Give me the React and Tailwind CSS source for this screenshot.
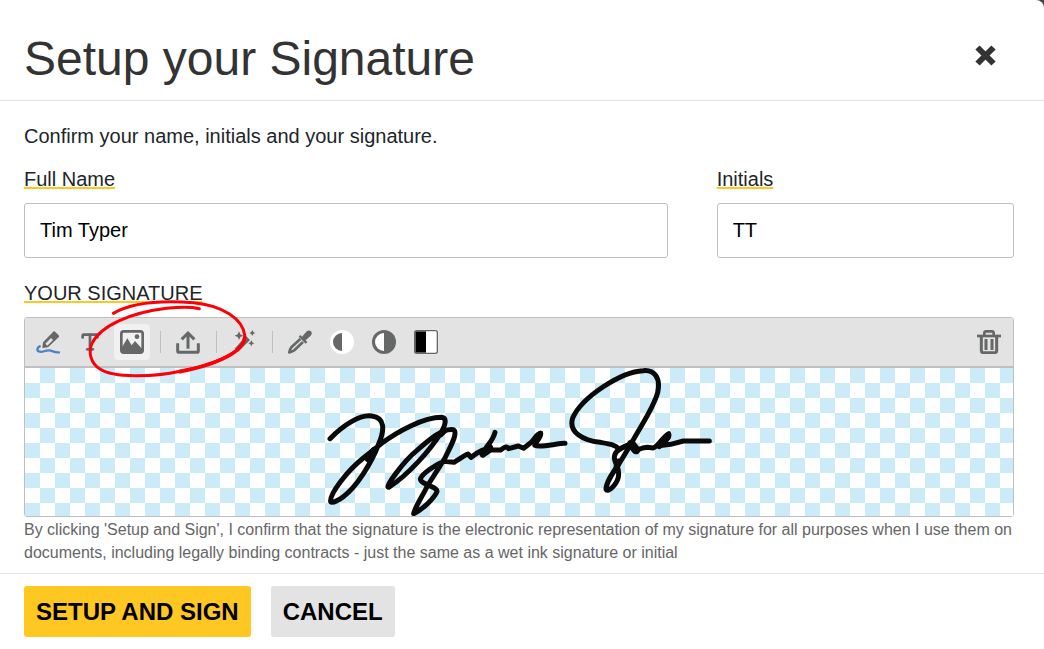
import React, { useState } from 'react';
import { Type } from 'lucide-react';

const ICON = '#666868';

const PenIcon = () => (
  <svg viewBox="0 0 72 72" className="h-6 w-6" fill="none">
    <path d="M11 49 C3 53 2 62 8 64 C19 70 25 60 39 61 C50 62 56 69 69 67" stroke="#4a83c4" strokeWidth="7" strokeLinecap="round" />
    <path d="M19 54 L21 37 L51 6 Q54 2 58 6 L68 16 Q71 19 68 22 L36 52 Z" fill={ICON} />
    <path d="M28 41 L45 24 L51 30 L34 47 Z" fill="#e3e3e3" />
  </svg>
);

const ImageIcon = () => (
  <svg viewBox="0 0 72 72" className="h-6 w-6">
    <rect x="4" y="4" width="64" height="64" rx="7" fill="#f1f1f1" stroke={ICON} strokeWidth="8" />
    <circle cx="51" cy="20" r="7" fill={ICON} />
    <path d="M6 66 V52 L22 25 L35 46 L45 33 L66 56 V66 Z" fill={ICON} />
  </svg>
);

const UploadIcon = () => (
  <svg viewBox="0 0 72 72" className="h-6 w-6" fill="none" stroke={ICON} strokeWidth="9">
    <path d="M36 56 V9 M17 28 L36 9 L55 28" />
    <path d="M5 40 V62 Q5 67 10 67 H62 Q67 67 67 62 V40" />
  </svg>
);

const WandIcon = () => (
  <svg viewBox="0 0 72 72" className="h-6 w-6" fill={ICON}>
    <path d="M21 4 L25 13 L34 17 L25 21 L21 30 L17 21 L8 17 L17 13 Z" />
    <path d="M61 0 L64 6 L70 9 L64 12 L61 18 L58 12 L52 9 L58 6 Z" />
    <path d="M58 31 L61 37 L67 40 L61 43 L58 49 L55 43 L49 40 L55 37 Z" />
    <path d="M42 18 L54 30 L18 66 L8 56 Z" />
  </svg>
);

const DropperIcon = () => (
  <svg viewBox="0 0 72 72" className="h-6 w-6" fill="none">
    <path d="M37 27 L10 52 Q6 57 4 67 Q14 65 19 61 L45 36" stroke={ICON} strokeWidth="8" strokeLinejoin="round" />
    <path d="M32 20 L37 15 L42 20 L55 5 Q62 -1 69 4 Q74 10 68 17 L53 31 L58 36 L53 41 Z" fill={ICON} />
  </svg>
);

const LightIcon = () => (
  <svg viewBox="0 0 72 72" className="h-6 w-6">
    <circle cx="36" cy="36" r="36" fill="#fff" />
    <path d="M36 9 A27 27 0 0 0 36 63 Z" fill={ICON} />
  </svg>
);

const ContrastIcon = () => (
  <svg viewBox="0 0 72 72" className="h-6 w-6">
    <circle cx="36" cy="36" r="36" fill={ICON} />
    <path d="M36 9 A27 27 0 0 0 36 63 Z" fill="#fff" />
  </svg>
);

const BlackWhiteIcon = () => (
  <svg viewBox="0 0 72 72" className="h-6 w-6">
    <rect x="2" y="2" width="68" height="68" rx="6" fill="#fff" />
    <path d="M4 4 H36 V68 H4 Z" fill="#000" />
    <rect x="2" y="2" width="68" height="68" rx="6" fill="none" stroke={ICON} strokeWidth="4" />
  </svg>
);

const TrashIcon = () => (
  <svg viewBox="0 0 72 72" className="h-6 w-6" fill="none" stroke={ICON}>
    <path d="M22 16 V9 Q22 4 27 4 H45 Q50 4 50 9 V16" strokeWidth="8" />
    <path d="M0 18 H72" strokeWidth="8" />
    <path d="M13 18 V62 Q13 68 19 68 H53 Q59 68 59 62 V18" strokeWidth="9" />
    <path d="M27 27 V60 M45 27 V60" strokeWidth="9" />
  </svg>
);

const CloseIcon = () => (
  <svg viewBox="0 0 21 21" className="h-[21px] w-[21px]">
    <path d="M2.5 2.5 L18.5 18.5 M18.5 2.5 L2.5 18.5" stroke="#333" strokeWidth="6" />
  </svg>
);

const Signature = () => (
  <svg viewBox="45 24 1164 444" className="h-[148px] w-[388px]" fill="none" stroke="#0a0a0a" strokeWidth="15" strokeLinecap="round" strokeLinejoin="round">
    {/* first name */}
    <path d="M60 236 C100 195 150 163 185 168 C226 173 224 210 206 252 C184 310 140 380 100 410 C84 422 66 430 62 425 C58 402 112 332 160 294 L215 250 C262 215 340 172 395 172 C412 174 406 196 393 218 C362 268 295 345 236 382 C222 384 280 305 320 272 C360 237 398 204 430 209 C446 218 420 262 404 296 L352 378 C336 412 318 434 311 461 C342 446 374 412 381 395 C382 378 330 374 331 356 C338 340 376 314 402 304 L432 307 C450 296 460 288 474 282 L483 292 L503 278 L518 270" />
    <path d="M555 217 C550 240 534 254 528 264 L518 286 L542 270 L572 270 C582 262 590 256 596 266 L625 258 L641 265 L660 250 C674 240 678 222 692 220" />
    <path d="M692 220 C694 234 674 246 674 256 C690 264 740 250 765 250" />
    <path d="M175 296 L192 272" strokeWidth="22" />
    <path d="M392 222 L402 212" strokeWidth="20" />
    <path d="M518 280 L538 262" strokeWidth="22" />
    <path d="M677 246 L687 228" strokeWidth="18" />
    {/* last name */}
    <path d="M967 245 C994 195 1030 145 1043 98 C1053 52 1032 29 1000 32 C932 35 815 112 788 174 C774 218 822 242 870 247 C900 252 916 254 926 266" />
    <path d="M967 245 L940 290 C916 330 888 362 888 388 C894 400 926 370 926 342 C926 314 908 304 914 286 C918 268 940 262 956 254 L976 272 L998 264 L1012 262 L1030 264 C1046 258 1060 228 1076 221 C1082 232 1060 246 1058 256 L1082 253 L1120 243 L1198 243" />
    <path d="M964 252 L978 270" strokeWidth="26" />
    <path d="M1048 256 L1072 230" strokeWidth="22" />
    <path d="M921 318 L926 306" strokeWidth="20" />
  </svg>
);

const ToolButton = ({ label, active, onClick, children }) => (
  <button
    type="button"
    aria-label={label}
    onClick={onClick}
    className={`flex h-9 w-9 items-center justify-center rounded ${active ? 'bg-[#f1f1f1]' : ''}`}
  >
    {children}
  </button>
);

const Separator = () => <span className="ml-1 mr-[3px] h-[22px] w-px bg-[#bfbfbf]" />;

const Label = ({ htmlFor, children }) => (
  <label htmlFor={htmlFor} className="block leading-7 underline decoration-[#ffc722] decoration-2 underline-offset-1 [text-decoration-skip-ink:none]">
    {children}
  </label>
);

export default function App() {
  const [fullName, setFullName] = useState('Tim Typer');
  const [initials, setInitials] = useState('TT');
  const [tool, setTool] = useState('image');

  const inputClass = 'mt-2.5 block h-[55px] w-full rounded-[3px] border border-[#bfbfbf] bg-white px-[15px] text-xl text-black outline-none';

  return (
    <div className="min-h-screen bg-[#444] font-['Liberation_Sans',Arial,sans-serif] text-xl text-[#212529]">
      <div className="min-h-screen rounded-tr-lg bg-white">
        {/* HEADER */}
        <header className="flex items-center justify-between border-b border-[#e3e3e3] pb-[17px] pl-6 pr-12 pt-[27px]">
          <h1 className="pt-2 text-[48px] leading-12 text-[#333]">Setup your Signature</h1>
          <button type="button" aria-label="Close">
            <CloseIcon />
          </button>
        </header>

        <main className="pb-[9px] pl-6 pr-[30px] pt-[21px]">
          <p className="leading-7">Confirm your name, initials and your signature.</p>

          <div className="mt-[15px] grid grid-cols-3 gap-[49px]">
            <div className="col-span-2">
              <Label htmlFor="full-name">Full Name</Label>
              <input id="full-name" type="text" value={fullName} onChange={(e) => setFullName(e.target.value)} className={inputClass} />
            </div>
            <div>
              <Label htmlFor="initials">Initials</Label>
              <input id="initials" type="text" value={initials} onChange={(e) => setInitials(e.target.value)} className={inputClass} />
            </div>
          </div>

          {/* SIGNATURE EDITOR */}
          <h2 className="mt-[21px] leading-7 underline decoration-[#ffc722] decoration-2 underline-offset-1 [text-decoration-skip-ink:none]">YOUR SIGNATURE</h2>
          <div className="mt-2.5 rounded-[3px] border border-[#bfbfbf]">
            <div className="relative flex items-center justify-between border-b-2 border-[#bfbfbf] bg-[#e3e3e3] py-1.5 pl-[5px] pr-1.5">
              <div className="flex items-center gap-1.5">
                <ToolButton label="Draw" onClick={() => setTool('draw')}><PenIcon /></ToolButton>
                <ToolButton label="Type" onClick={() => setTool('type')}><Type size={22} strokeWidth={3} color={ICON} /></ToolButton>
                <ToolButton label="Image" active={tool === 'image'} onClick={() => setTool('image')}><ImageIcon /></ToolButton>
                <Separator />
                <ToolButton label="Upload"><UploadIcon /></ToolButton>
                <Separator />
                <ToolButton label="Enhance"><WandIcon /></ToolButton>
                <Separator />
                <ToolButton label="Pick colour"><DropperIcon /></ToolButton>
                <ToolButton label="Lighten"><LightIcon /></ToolButton>
                <ToolButton label="Contrast"><ContrastIcon /></ToolButton>
                <ToolButton label="Black and white"><BlackWhiteIcon /></ToolButton>
              </div>
              <ToolButton label="Delete"><TrashIcon /></ToolButton>

              {/* hand drawn highlight over the image and upload tools */}
              <svg viewBox="195 54 495 255" className="pointer-events-none absolute -top-5 left-[60px] h-[85px] w-[165px]" fill="none" stroke="#fb0007" strokeLinecap="round">
                <path d="M280 100 C340 65 440 62 520 68 C610 76 668 118 674 165 C681 222 560 258 480 274" strokeWidth="9" />
                <path d="M480 274 C400 292 280 294 240 267 C212 250 204 216 216 190 C242 138 330 98 440 85 C480 81 515 81 538 86" strokeWidth="9" />
                <path d="M674 172 C668 226 560 260 480 275" strokeWidth="11" />
              </svg>
            </div>
            <div className="flex justify-center bg-[conic-gradient(#cbebf9_25%,#fff_0_50%,#cbebf9_0_75%,#fff_0)] bg-[size:30px_30px]">
              <Signature />
            </div>
          </div>
          <p className="mt-px text-base leading-[23px] text-[#666]">
            By clicking 'Setup and Sign', I confirm that the signature is the electronic representation of my signature for all purposes when I use them on documents, including legally binding contracts - just the same as a wet ink signature or initial
          </p>
        </main>

        <footer className="flex gap-5 border-t border-[#e3e3e3] px-6 py-3 text-2xl font-bold text-black">
          <button type="button" className="h-[51px] rounded-[3px] bg-[#ffc722] px-3">SETUP AND SIGN</button>
          <button type="button" className="h-[51px] rounded-[3px] bg-[#e3e3e3] px-3">CANCEL</button>
        </footer>
      </div>
    </div>
  );
}
